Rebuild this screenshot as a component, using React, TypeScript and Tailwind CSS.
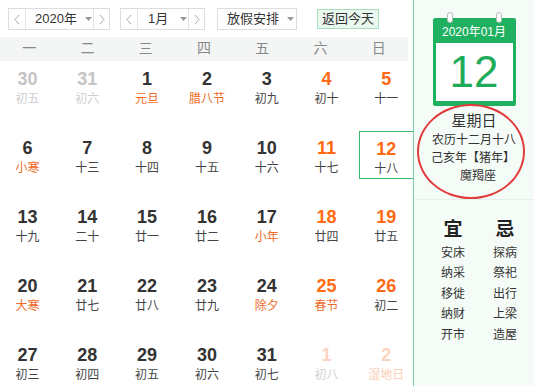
import React from "react";

type Day = {
  n: number;
  lunar: string;
  other?: boolean;
  fest?: boolean;
  today?: boolean;
};

const weeks: Day[][] = [
  [
    { n: 30, lunar: "初五", other: true },
    { n: 31, lunar: "初六", other: true },
    { n: 1, lunar: "元旦", fest: true },
    { n: 2, lunar: "腊八节", fest: true },
    { n: 3, lunar: "初九" },
    { n: 4, lunar: "初十" },
    { n: 5, lunar: "十一" },
  ],
  [
    { n: 6, lunar: "小寒", fest: true },
    { n: 7, lunar: "十三" },
    { n: 8, lunar: "十四" },
    { n: 9, lunar: "十五" },
    { n: 10, lunar: "十六" },
    { n: 11, lunar: "十七" },
    { n: 12, lunar: "十八", today: true },
  ],
  [
    { n: 13, lunar: "十九" },
    { n: 14, lunar: "二十" },
    { n: 15, lunar: "廿一" },
    { n: 16, lunar: "廿二" },
    { n: 17, lunar: "小年", fest: true },
    { n: 18, lunar: "廿四" },
    { n: 19, lunar: "廿五" },
  ],
  [
    { n: 20, lunar: "大寒", fest: true },
    { n: 21, lunar: "廿七" },
    { n: 22, lunar: "廿八" },
    { n: 23, lunar: "廿九" },
    { n: 24, lunar: "除夕", fest: true },
    { n: 25, lunar: "春节", fest: true },
    { n: 26, lunar: "初二" },
  ],
  [
    { n: 27, lunar: "初三" },
    { n: 28, lunar: "初四" },
    { n: 29, lunar: "初五" },
    { n: 30, lunar: "初六" },
    { n: 31, lunar: "初七" },
    { n: 1, lunar: "初八", other: true },
    { n: 2, lunar: "湿地日", other: true, fest: true },
  ],
];

const weekdays = ["一", "二", "三", "四", "五", "六", "日"];
const yi = ["安床", "纳采", "移徙", "纳财", "开市"];
const ji = ["探病", "祭祀", "出行", "上梁", "造屋"];

const Chevron = ({ dir }: { dir: "l" | "r" }) => (
  <svg width="6" height="11" viewBox="0 0 6 11" fill="none">
    <path
      d={dir === "l" ? "M5 1 L1 5.5 L5 10" : "M1 1 L5 5.5 L1 10"}
      stroke="#aaa"
      strokeWidth="1"
    />
  </svg>
);

const Caret = () => (
  <svg width="7" height="4" viewBox="0 0 7 4" className="shrink-0">
    <path d="M0 0 L7 0 L3.5 4 Z" fill="#999" />
  </svg>
);

const DayCell = ({ d, col }: { d: Day; col: number }) => {
  const weekend = col >= 5;
  let numColor = "text-[#333]";
  let lunarColor = "text-[#444]";
  if (d.other) {
    numColor = weekend ? "text-[#fbd4bf]" : "text-[#c4c4c4]";
    lunarColor = d.fest ? "text-[#f9cfb6]" : "text-[#cfcfcf]";
  } else {
    if (weekend) numColor = "text-[#ff6a13]";
    if (d.fest) lunarColor = "text-[#ef6a28]";
  }
  return (
    <div
      className={`h-[48px] flex flex-col items-center pt-[6px] ${
        d.today ? "border border-[#35b86a] w-[55px]" : ""
      }`}
    >
      <div className={`text-[18px] font-bold leading-[22px] ${numColor}`}>{d.n}</div>
      <div className={`text-[12px] leading-[16px] mt-[1px] ${lunarColor}`}>{d.lunar}</div>
    </div>
  );
};

export default function App() {
  return (
    <div
      className="w-[534px] h-[386px] overflow-hidden flex bg-white"
      style={{ fontFamily: '"Liberation Sans", "Noto Sans CJK SC", sans-serif' }}
    >
      {/* left calendar */}
      <div className="w-[413px] shrink-0 flex flex-col">
        <div className="h-[38px] flex items-start pt-[8px] pl-[8px] text-[13px] text-[#333] whitespace-nowrap">
          <div className="flex h-[22px] border border-[#ddd]">
            <div className="w-[17px] flex items-center justify-center border-r border-[#e3e3e3]">
              <Chevron dir="l" />
            </div>
            <div className="w-[67px] flex items-center pl-[9px] gap-[8px]">
              <span>2020年</span>
              <Caret />
            </div>
            <div className="w-[16px] flex items-center justify-center border-l border-[#e3e3e3]">
              <Chevron dir="r" />
            </div>
          </div>
          <div className="flex h-[22px] border border-[#ddd] ml-[10px]">
            <div className="w-[17px] flex items-center justify-center border-r border-[#e3e3e3]">
              <Chevron dir="l" />
            </div>
            <div className="w-[50px] flex items-center pl-[10px] gap-[12px]">
              <span>1月</span>
              <Caret />
            </div>
            <div className="w-[16px] flex items-center justify-center border-l border-[#e3e3e3]">
              <Chevron dir="r" />
            </div>
          </div>
          <div className="flex items-center h-[22px] w-[80px] border border-[#ddd] ml-[12px] pl-[9px] gap-[8px]">
            <span>放假安排</span>
            <Caret />
          </div>
          <div className="flex items-center justify-center h-[20px] mt-[1px] w-[62px] ml-[20px] border border-[#a8dcbf] bg-[#eaf8ef] text-[13px]">
            返回今天
          </div>
        </div>
        <div className="h-[25px] w-[408px] bg-[#f4f6f6] grid grid-cols-7 items-center text-[14px] text-[#888]">
          {weekdays.map((w) => (
            <div key={w} className="text-center">
              {w}
            </div>
          ))}
        </div>
        <div className="grid grid-cols-[repeat(7,55px)] gap-x-[4.8px] gap-y-[21px] pt-[1px]">
          {weeks.map((row, ri) =>
            row.map((d, ci) => <DayCell key={`${ri}-${ci}`} d={d} col={ci} />)
          )}
        </div>
      </div>

      {/* right panel */}
      <div className="flex-1 border-l border-[#7fd0a6] bg-[#f5fcf8] relative flex flex-col">
        <div className="h-[200px] border-b border-[#e2f1e8] relative flex flex-col items-center">
          <div className="relative mt-[18px] w-[83px] h-[88px] bg-[#1fb160] rounded-[2px] flex flex-col items-center">
            <div className="absolute -top-[6px] left-[14px] w-[6px] h-[11px] rounded-full bg-white border border-[#bbb]" />
            <div className="absolute -top-[6px] right-[14px] w-[6px] h-[11px] rounded-full bg-white border border-[#bbb]" />
            <div className="h-[25px] flex items-center text-white text-[12px] pt-[2px]">
              2020年01月
            </div>
            <div className="w-[77px] h-[58px] bg-white flex items-center justify-center text-[44px] leading-none text-[#1fac5a]">
              12
            </div>
          </div>
          <div className="mt-[6px] text-[15px] leading-[18px] text-[#333]">星期日</div>
          <div className="mt-[1px] text-[12px] leading-[18px] text-[#333]">农历十二月十八</div>
          <div className="text-[12px] leading-[18px] text-[#333] -ml-[2px]">己亥年【猪年】</div>
          <div className="text-[12px] leading-[19px] text-[#333] ml-[8px]">魔羯座</div>
          <div className="absolute left-[3px] top-[104px] w-[108px] h-[95px] rounded-[50%] border-2 border-[#e03c3c]" />
        </div>
        <div className="grid grid-cols-[52px_52px] pl-[13px] pt-[19px] text-center">
          <div className="text-[19px] font-bold leading-[22px] text-[#222]">宜</div>
          <div className="text-[19px] font-bold leading-[22px] text-[#222]">忌</div>
          <div className="flex flex-col mt-[2px]">
            {yi.map((s) => (
              <div key={s} className="text-[12px] leading-[20.4px] text-[#333]">
                {s}
              </div>
            ))}
          </div>
          <div className="flex flex-col mt-[2px]">
            {ji.map((s) => (
              <div key={s} className="text-[12px] leading-[20.4px] text-[#333]">
                {s}
              </div>
            ))}
          </div>
        </div>
      </div>
    </div>
  );
}
